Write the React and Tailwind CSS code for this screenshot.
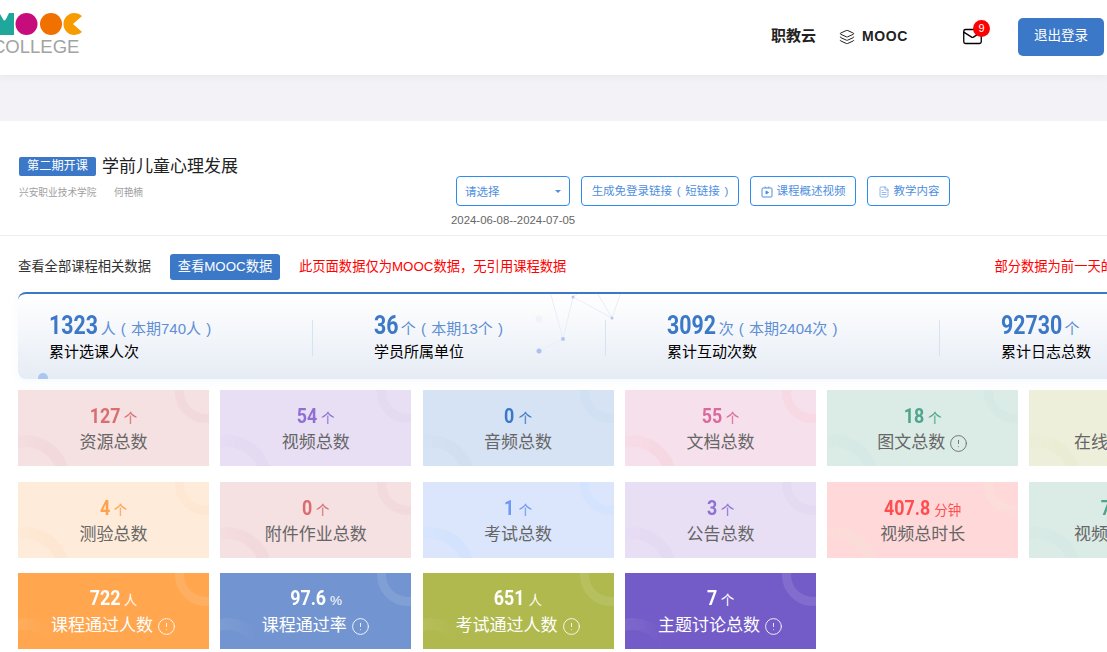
import React from 'react';
import { Layers, Mail, CircleAlert, FileText } from 'lucide-react';

const pale = [
    { value: '127', trim: 'mx-[-3px]', unit: '个', label: '资源总数', bg: 'bg-[#f5e0e2]', num: 'text-[#d96d70]', ring: 'border-[#f2d7da]' },
    { value: '54', trim: 'mx-[-2px]', unit: '个', label: '视频总数', bg: 'bg-[#e8dff5]', num: 'text-[#8f6fd2]', ring: 'border-[#e3d8f1]' },
    { value: '0', trim: 'mx-[-1px]', unit: '个', label: '音频总数', bg: 'bg-[#d6e3f4]', num: 'text-[#3c78c8]', ring: 'border-[#cfdef1]' },
    { value: '55', trim: 'mx-[-2px]', unit: '个', label: '文档总数', bg: 'bg-[#f6e0ec]', num: 'text-[#d96a9b]', ring: 'border-[#f7d6df]' },
    { value: '18', trim: 'mx-[-2px]', unit: '个', label: '图文总数', info: true, bg: 'bg-[#dbebe5]', num: 'text-[#4fa58c]', ring: 'border-[#d5e9e4]' },
    { value: '0', trim: 'mx-[-1px]', unit: '个', label: '在线作业总数', bg: 'bg-[#eeefda]', num: 'text-[#afb94d]', ring: 'border-[#eaecd2]' },
    { value: '4', trim: 'mx-[-1px]', unit: '个', label: '测验总数', bg: 'bg-[#feebd9]', num: 'text-[#ffa24e]', ring: 'border-[#fde6d0]' },
    { value: '0', trim: 'mx-[-1px]', unit: '个', label: '附件作业总数', bg: 'bg-[#f5e0e2]', num: 'text-[#d96d70]', ring: 'border-[#f2d7da]' },
    { value: '1', trim: 'mx-[-1px]', unit: '个', label: '考试总数', bg: 'bg-[#dbe6fd]', num: 'text-[#6f97f5]', ring: 'border-[#d1e1fd]' },
    { value: '3', trim: 'mx-[-1px]', unit: '个', label: '公告总数', bg: 'bg-[#e8dff5]', num: 'text-[#8f6fd2]', ring: 'border-[#e3d8f1]' },
    { value: '407.8', trim: 'mx-[-4px]', unit: '分钟', label: '视频总时长', bg: 'bg-[#ffd9d9]', num: 'text-[#ff4d4f]', ring: 'border-[#fbded8]' },
    { value: '712', trim: 'mx-[-3px]', unit: '个', label: '视频观看总数', bg: 'bg-[#dbebe5]', num: 'text-[#4fa58c]', ring: 'border-[#d5e9e4]' },
];

const solid = [
    { value: '722', trim: 'mx-[-3px]', unit: '人', label: '课程通过人数', bg: 'bg-[#ffa64f]' },
    { value: '97.6', trim: 'mx-[-3px]', unit: '%', label: '课程通过率', bg: 'bg-[#7294d0]' },
    { value: '651', trim: 'mx-[-3px]', unit: '人', label: '考试通过人数', bg: 'bg-[#afb94d]' },
    { value: '7', trim: 'mx-[-1px]', unit: '个', label: '主题讨论总数', bg: 'bg-[#745cc8]' },
];

const stats = [
    { value: '1323', trim: 'mr-[-10px]', unit: '人 ( 本期740人 )', label: '累计选课人次', box: 'w-[295px] pl-[31px]' },
    { value: '36', trim: 'mr-[-5px]', unit: '个 ( 本期13个 )', label: '学员所属单位', box: 'w-[293px] pl-[61px]' },
    { value: '3092', trim: 'mr-[-10px]', unit: '次 ( 本期2404次 )', label: '累计互动次数', box: 'w-[334px] pl-[61px]' },
    { value: '92730', trim: 'mr-[-13px]', unit: '个', label: '累计日志总数', box: 'w-[300px] pl-[61px]', last: true },
];

function Rings({ color, fade }) {
    return (
        <>
            <div className={`absolute -top-[29px] -right-[28px] w-[62px] h-[62px] rounded-full border-[9px] ${color}`} />
            <div className={`absolute -bottom-[59px] -left-[38px] w-[90px] h-[90px] rounded-full border-[12px] ${color} ${fade}`} />
        </>
    );
}

function PaleCard({ value, trim, unit, label, info, bg, num, ring }) {
    return (
        <div className={`relative overflow-hidden h-[76px] flex flex-col items-center pt-[11px] ${bg}`}>
            <div className="absolute inset-0 opacity-70">
                <Rings color={ring} fade="[mask-image:linear-gradient(to_right,transparent_20%,black_70%)]" />
            </div>
            <div className={`relative flex items-baseline gap-[4px] h-[30px] ${num}`}>
                <span className={`inline-block scale-x-[.85] font-['Roboto',sans-serif] font-bold text-[21px] ${trim}`}>{value}</span>
                <span className="text-[13.500px]">{unit}</span>
            </div>
            <div className="relative flex items-center gap-[4px] text-[17px] leading-[24px] text-[#666666]">
                {label}
                {info && <CircleAlert size={19} strokeWidth={1.1} />}
            </div>
        </div>
    );
}

function SolidCard({ value, trim, unit, label, bg }) {
    return (
        <div className={`relative overflow-hidden h-[76px] flex flex-col items-center pt-[10px] text-white ${bg}`}>
            <Rings color="border-white/10" fade="[mask-image:linear-gradient(to_right,black_30%,transparent_85%)]" />
            <div className="relative flex items-baseline gap-[4px] h-[31px]">
                <span className={`inline-block scale-x-[.85] font-['Roboto',sans-serif] font-bold text-[21px] ${trim}`}>{value}</span>
                <span className="text-[13.500px]">{unit}</span>
            </div>
            <div className="relative flex items-center gap-[4px] text-[17px] leading-[24px]">
                {label}
                <CircleAlert size={19} strokeWidth={1.1} />
            </div>
        </div>
    );
}

function Logo() {
    return (
        <div className="-ml-[8px] flex flex-col self-start">
            <svg width="92" height="36" viewBox="0 0 92 36">
                <path d="M8 14 L11 19 Q12 22 14 19 L17 13 L22 13 L22 35 L8 35 Z" fill="#20a79b" />
                <circle cx="34.500" cy="24" r="11" fill="#c70c7b" />
                <circle cx="59" cy="24" r="11" fill="#f07000" />
                <path d="M90 16 A11 11 0 1 0 90 32 L81 24 Z" fill="#f79b00" />
            </svg>
            <span className="mt-[1px] font-['Liberation_Sans',sans-serif] text-[18.500px] leading-[20px] text-[#a3a3a3]">COLLEGE</span>
        </div>
    );
}

function Network() {
    return (
        <svg className="absolute left-0 top-0" width="640" height="87" viewBox="0 0 640 87">
            <g stroke="#e8edf9" strokeWidth="1" fill="none">
                <path d="M0 58 L25 82" />
                <path d="M521 57 L545 45 L555 3 L594 24 L604 -5" />
                <path d="M545 45 L530 -10" />
                <path d="M555 3 L574 -10 L594 24" />
            </g>
            <circle cx="25" cy="84" r="5" fill="#a9c8f0" />
            <circle cx="521" cy="57" r="2.500" fill="#a9c3ee" />
            <circle cx="545" cy="45" r="2" fill="#b3c8ee" />
            <circle cx="555" cy="3" r="1.500" fill="#b9c4ee" />
            <circle cx="594" cy="24" r="1.500" fill="#b9c4ee" />
            <circle cx="521" cy="25" r="3.500" fill="#f0f3fb" />
        </svg>
    );
}

export default function App() {
    return (
        <div className="w-[1107px] h-[652px] overflow-hidden bg-white font-['Liberation_Sans','Noto_Sans_CJK_SC',sans-serif]">
            <header className="relative h-[75px] bg-white flex items-center pb-[2px] shadow-[0_2px_8px_rgba(0,0,0,0.05)]">
                <Logo />
                <div className="ml-auto flex items-center pr-[3px] text-[#222222]">
                    <span className="text-[15px] font-semibold">职教云</span>
                    <Layers size={16} strokeWidth={1.5} className="ml-[23px]" />
                    <span className="ml-[7px] text-[14px] font-bold tracking-[0.6px]">MOOC</span>
                    <div className="relative ml-[54px]">
                        <Mail size={21} strokeWidth={1.5} className="text-black" />
                        <span className="absolute -top-[6px] left-[11px] w-[17px] h-[17px] rounded-full bg-[#ff0000] text-white text-[11px] leading-[17px] text-center">9</span>
                    </div>
                    <button className="ml-[35px] w-[86px] h-[38px] rounded-[5px] bg-[#3c78c8] text-white text-[13.500px]">退出登录</button>
                </div>
            </header>

            <div className="h-[46px] bg-[#f3f2f7]" />

            <section className="relative h-[115px] border-b border-[#eeeeee] pl-[19px]">
                <div className="flex items-center pt-[36px]">
                    <span className="w-[77px] h-[19px] rounded-[2px] bg-[#3c78c8] text-white text-[12.200px] leading-[19px] text-center">第二期开课</span>
                    <span className="ml-[6px] text-[17px] leading-[19px] text-[#222222]">学前儿童心理发展</span>
                </div>
                <div className="flex mt-[8px] text-[9.700px] leading-[18px] text-[#a0a0a0]">
                    <span className="w-[95px]">兴安职业技术学院</span>
                    <span>何艳楠</span>
                </div>
                <div className="absolute left-[456px] top-[55px] flex gap-[11px] text-[11.500px] text-[#4f8fe0]">
                    <div className="w-[114px] h-[30px] rounded-[4px] border border-[#2d8cf0] flex items-center justify-between pl-[8px] pr-[8px]">
                        <span className="mt-[3px]">请选择</span>
                        <span className="w-0 h-0 border-x-[3px] border-x-transparent border-t-[3px] border-t-[#4f8fe0]" />
                    </div>
                    <button className="w-[158px] h-[30px] pt-[1px] rounded-[4px] border border-[#2d8cf0] whitespace-pre [word-spacing:1.500px]">生成免登录链接 ( 短链接 )</button>
                    <button className="w-[106px] h-[30px] pt-[1px] rounded-[4px] border border-[#2d8cf0] flex items-center justify-center gap-[4px]">
                        <svg width="12" height="12" viewBox="0 0 12 12" fill="none" stroke="currentColor" strokeWidth="1">
                            <rect x="1" y="2" width="10" height="9" rx="1" />
                            <path d="M4 0.500 L5 2 M8 0.500 L7 2" />
                            <path d="M5 5 L7.500 6.500 L5 8 Z" fill="currentColor" />
                        </svg>
                        课程概述视频
                    </button>
                    <button className="w-[83px] h-[30px] pt-[1px] rounded-[4px] border border-[#2d8cf0] flex items-center justify-center gap-[4px]">
                        <FileText size={12} strokeWidth={1.25} />
                        教学内容
                    </button>
                </div>
                <span className="absolute left-[451px] top-[91px] text-[11.400px] leading-[16px] text-[#666666]">2024-06-08--2024-07-05</span>
            </section>

            <div className="flex items-center h-[56px] pt-[6px] pl-[18px] text-[13.300px] whitespace-nowrap">
                <span className="shrink-0 text-[#333333]">查看全部课程相关数据</span>
                <button className="shrink-0 ml-[19px] w-[110px] h-[26px] rounded-[3px] bg-[#3c78c8] text-white">查看MOOC数据</button>
                <span className="shrink-0 ml-[19px] text-[#ff0000]">此页面数据仅为MOOC数据，无引用课程数据</span>
                <span className="shrink-0 ml-[428px] text-[#ff0000]">部分数据为前一天的数据</span>
            </div>

            <div className="pl-[18px]">
                <div className="relative overflow-hidden w-[1300px] h-[87px] rounded-l-[8px] border-t-2 border-[#3c78c8] bg-gradient-to-b from-white to-[#e6ecf5] flex items-start shadow-[0_2px_8px_rgba(60,120,200,0.05)]">
                    <Network />
                    {stats.map((s) => (
                        <div key={s.label} className={`relative h-[36px] mt-[26px] shrink-0 ${s.box} ${s.last ? '' : 'border-r border-[#d8e3f2]'}`}>
                            <div className="-mt-[8px] flex items-baseline text-[#3c78c8] whitespace-pre h-[27px]">
                                <span className={`inline-block origin-left scale-x-[.82] font-['Roboto',sans-serif] font-bold text-[26px] leading-[27px] ${s.trim}`}>{s.value}</span>
                                <span className="ml-[2px] text-[15px] text-[#5f8fd3] [word-spacing:1px]">{s.unit}</span>
                            </div>
                            <div className="mt-[3px] text-[15px] leading-[20px] text-black whitespace-nowrap">{s.label}</div>
                        </div>
                    ))}
                </div>
            </div>

            <div className="pl-[18px] mt-[11px] grid grid-cols-[repeat(6,191px)] gap-x-[11.300px] gap-y-[15.600px] w-[1300px]">
                {pale.map((c) => <PaleCard key={c.label} {...c} />)}
                {solid.map((c) => <SolidCard key={c.label} {...c} />)}
            </div>
        </div>
    );
}
